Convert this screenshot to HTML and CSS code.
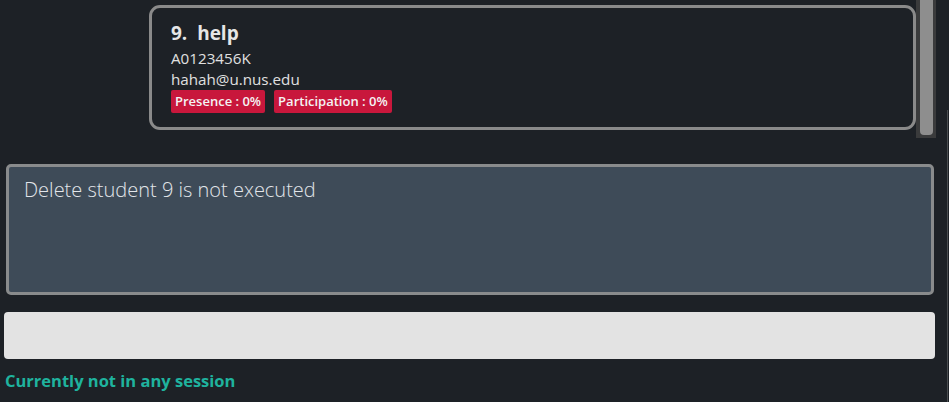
FILE: index.html
```html
<!DOCTYPE html>
<html>
<head>
<meta charset="utf-8">
<link rel="stylesheet" href="styles.css">
</head>
<body>
<div class="app">
  <div class="list-pane">
    <div class="list">
      <div class="card">
        <div class="card-title">9.  help</div>
        <div class="card-line">A0123456K</div>
        <div class="card-line">hahah@u.nus.edu</div>
        <div class="tags">
          <span class="tag">Presence : 0%</span>
          <span class="tag">Participation : 0%</span>
        </div>
      </div>
    </div>
    <div class="scrollbar"><div class="thumb"></div></div>
  </div>
  <div class="result">Delete student 9 is not executed</div>
  <div class="command"></div>
  <div class="status">Currently not in any session</div>
  <div class="edge"></div>
</div>
</body>
</html>
```
FILE: styles.css
```css
html, body {
  margin: 0;
  padding: 0;
  background: #1d2126;
  width: 949px;
  height: 402px;
  overflow: hidden;
  font-family: "Open Sans", "Noto Sans", sans-serif;
}
.app {
  position: relative;
  width: 949px;
  height: 402px;
  display: flex;
  flex-direction: column;
}
.list-pane {
  display: flex;
  height: 138px;
  padding-left: 149px;
}
.list {
  width: 767px;
  padding-top: 5px;
}
.card {
  box-sizing: border-box;
  height: 125px;
  border: 3px solid #8a8a8a;
  border-radius: 11px;
  padding: 12px 0 0 19px;
  color: #e6e6e6;
}
.card-title {
  font-size: 19px;
  font-weight: 700;
  white-space: pre;
  line-height: 26px;
  height: 28px;
}
.card-line {
  font-size: 15.2px;
  line-height: 21px;
  color: #e0e0e0;
}
.tags {
  display: flex;
  gap: 9px;
  margin-top: 0;
}
.tag {
  background: #c8173c;
  color: #f4f4f4;
  font-size: 13px;
  font-weight: 600;
  line-height: 23px;
  padding: 0 4px 0 4px;
  border-radius: 2px;
}
.scrollbar {
  width: 20px;
  height: 138px;
  background: #3a3b3c;
  display: flex;
  justify-content: center;
}
.thumb {
  width: 13px;
  height: 135px;
  background: #8e8e8e;
  border-radius: 0 0 4px 4px;
}
.result {
  box-sizing: border-box;
  margin: 26px 0 0 6px;
  width: 928px;
  height: 131px;
  background: #3e4b58;
  border: 3px solid #898b8c;
  border-radius: 5px;
  padding: 8px 0 0 15px;
  color: #e2e6ea;
  font-size: 20px;
  font-weight: 300;
  line-height: 30px;
}
.command {
  margin: 17px 0 0 4px;
  width: 931px;
  height: 47px;
  background: #e3e3e3;
  border-radius: 4px;
}
.status {
  margin: 11px 0 0 5px;
  color: #1fb39e;
  font-size: 16.5px;
  font-weight: 700;
  line-height: 22px;
}
.edge {
  position: absolute;
  right: 1px;
  top: 110px;
  bottom: 0;
  width: 1px;
  background: #4a4d50;
}
```
